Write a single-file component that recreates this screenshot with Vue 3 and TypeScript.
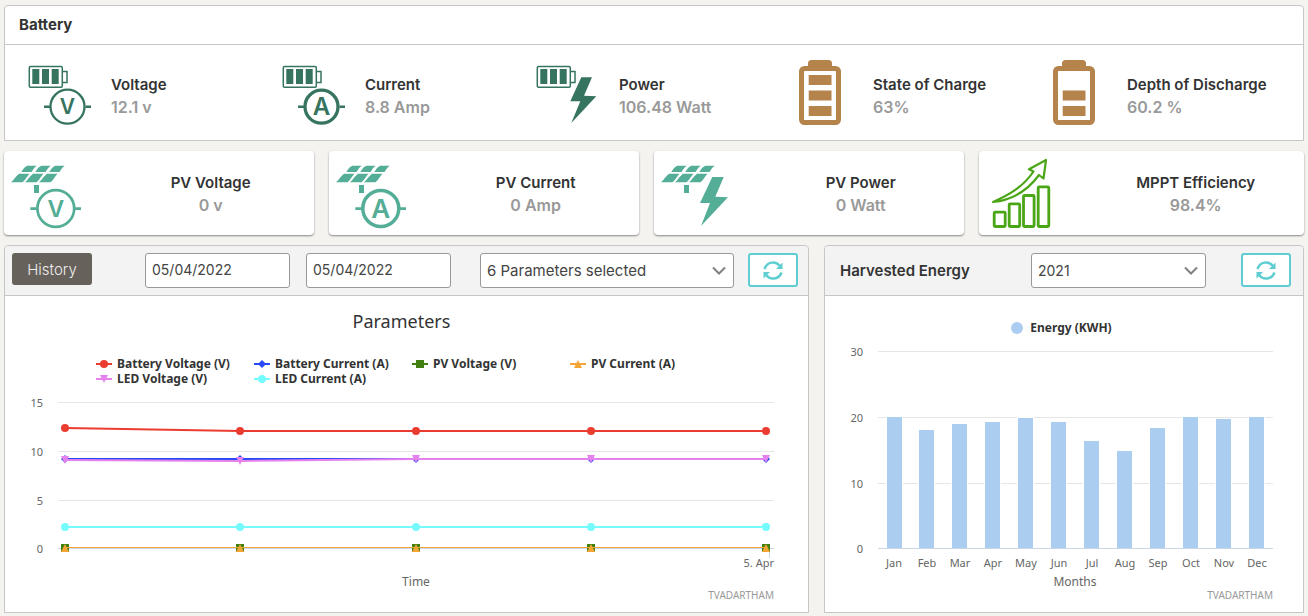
<script setup lang="ts">
import { ref } from 'vue'

type Kind = 'volt' | 'amp' | 'bolt' | 'full' | 'low' | 'growth'
type Shape = 'circle' | 'diamond' | 'square' | 'up' | 'down'

interface Metric {
  label: string
  value: string
  kind: Kind
}

interface Series {
  name: string
  color: string
  shape: Shape
  width: number
  ys: number[]
}

const battery: Metric[] = [
  { label: 'Voltage', value: '12.1 v', kind: 'volt' },
  { label: 'Current', value: '8.8 Amp', kind: 'amp' },
  { label: 'Power', value: '106.48 Watt', kind: 'bolt' },
  { label: 'State of Charge', value: '63%', kind: 'full' },
  { label: 'Depth of Discharge', value: '60.2 %', kind: 'low' },
]

const solar: Metric[] = [
  { label: 'PV Voltage', value: '0 v', kind: 'volt' },
  { label: 'PV Current', value: '0 Amp', kind: 'amp' },
  { label: 'PV Power', value: '0 Watt', kind: 'bolt' },
  { label: 'MPPT Efficiency', value: '98.4%', kind: 'growth' },
]

const startDate = ref('05/04/2022')
const endDate = ref('05/04/2022')
const selection = ref('6 Parameters selected')
const year = ref('2021')

const pointX = [60, 235, 411, 586, 761]
const series: Series[] = [
  { name: 'Battery Voltage (V)', color: '#ea3c30', shape: 'circle', width: 2, ys: [38, 41, 41, 41, 41] },
  { name: 'Battery Current (A)', color: '#2748f5', shape: 'diamond', width: 2, ys: [69, 69, 69, 69, 69] },
  { name: 'PV Voltage (V)', color: '#3f8010', shape: 'square', width: 1, ys: [158, 158, 158, 158, 158] },
  { name: 'PV Current (A)', color: '#f3a536', shape: 'up', width: 1, ys: [158, 158, 158, 158, 158] },
  { name: 'LED Voltage (V)', color: '#e582ee', shape: 'down', width: 2, ys: [70, 71, 69, 69, 69] },
  { name: 'LED Current (A)', color: '#75fbfd', shape: 'circle', width: 2, ys: [137, 137, 137, 137, 137] },
]

const lineTicks = [
  { label: '15', y: 12 },
  { label: '10', y: 61 },
  { label: '5', y: 110 },
  { label: '0', y: 158 },
]

const barTicks = [
  { label: '30', y: 11 },
  { label: '20', y: 77 },
  { label: '10', y: 143 },
  { label: '0', y: 208 },
]

const months = [
  { name: 'Jan', height: 131 },
  { name: 'Feb', height: 118 },
  { name: 'Mar', height: 124 },
  { name: 'Apr', height: 126 },
  { name: 'May', height: 130 },
  { name: 'Jun', height: 126 },
  { name: 'Jul', height: 107 },
  { name: 'Aug', height: 97 },
  { name: 'Sep', height: 120 },
  { name: 'Oct', height: 131 },
  { name: 'Nov', height: 129 },
  { name: 'Dec', height: 131 },
]

function barX(index: number): number {
  return index === 0 ? 62 : 61 + index * 33
}

function markerPath(shape: Shape, x: number, y: number): string {
  if (shape === 'circle') return `M${x - 4} ${y}a4 4 0 1 0 8 0a4 4 0 1 0 -8 0z`
  if (shape === 'diamond') return `M${x} ${y - 4}L${x + 4} ${y}L${x} ${y + 4}L${x - 4} ${y}z`
  if (shape === 'square') return `M${x - 4} ${y - 4}h8v8h-8z`
  if (shape === 'up') return `M${x} ${y - 4}L${x + 4} ${y + 4}H${x - 4}z`
  return `M${x - 4} ${y - 4}h8L${x} ${y + 4}z`
}

function linePath(s: Series): string {
  const shift = s.width === 1 ? -0.5 : 0
  return pointX.map((x, i) => `${i ? 'L' : 'M'}${x} ${s.ys[i] + shift}`).join('')
}
</script>

<template>
  <main class="page">
    <section class="panel battery">
      <h2 class="battery-head">Battery</h2>
      <div class="battery-body">
        <div v-for="m in battery" :key="m.label" class="metric">
          <svg class="metric-icon" viewBox="0 0 64 66" aria-hidden="true">
            <g v-if="m.kind === 'full' || m.kind === 'low'" fill="#b5844d">
              <path d="M18 7V3.500a3.500 3.500 0 0 1 3.500-3.500h17a3.500 3.500 0 0 1 3.500 3.500V7z" />
              <rect x="11.500" y="8.500" width="37" height="54" rx="3" fill="none" stroke="#b5844d" stroke-width="5" />
              <rect v-if="m.kind === 'full'" x="18.700" y="15" width="22.800" height="10" />
              <rect x="18.700" y="30.500" width="22.800" height="10" />
              <rect x="18.700" y="46" width="22.800" height="10" />
            </g>
            <g v-else fill="#36745f">
              <rect x="1.300" y="6.500" width="33" height="20.800" rx="1.200" fill="none" stroke="#36745f" stroke-width="1.500" />
              <path d="M34.500 11.500h4.500v11h-4.500" fill="none" stroke="#36745f" stroke-width="1.500" />
              <path d="M4.300 9h7v15h-7zM14 9h7v15h-7zM23.700 9h7v15h-7z" />
              <path v-if="m.kind === 'bolt'" d="M45.300 17.300H56L48 35.700L60.300 36.300L35.300 63L44.300 41.300H34.300z" />
              <g v-else>
                <circle
                  cx="39.500" cy="46.700" :r="m.kind === 'volt' ? 17 : 16.500" fill="none" stroke="#36745f"
                  :stroke-width="m.kind === 'volt' ? 2.300 : 3.300"
                />
                <path d="M16 46.700h6M57.500 46.700H63" stroke="#36745f" stroke-width="2.500" />
                <text
                  class="letter" x="39.500" :y="m.kind === 'volt' ? 54 : 55"
                  :font-size="m.kind === 'volt' ? 21 : 24" text-anchor="middle"
                >{{ m.kind === 'volt' ? 'V' : 'A' }}</text>
              </g>
            </g>
          </svg>
          <div class="metric-text">
            <div class="label">{{ m.label }}</div>
            <div class="value">{{ m.value }}</div>
          </div>
        </div>
      </div>
    </section>

    <section class="solar">
      <article v-for="m in solar" :key="m.label" class="card">
        <div class="card-icon">
          <svg viewBox="0 0 72 72" aria-hidden="true">
            <g v-if="m.kind === 'growth'" fill="none" stroke="#4aa616" stroke-width="2.800" stroke-linejoin="round">
              <rect x="8.200" y="54.200" width="11" height="14.300" rx="1" />
              <rect x="23.200" y="45.800" width="10.500" height="22.700" rx="1" />
              <rect x="37.500" y="37.500" width="10.600" height="31" rx="1" />
              <rect x="52.200" y="28.900" width="10.600" height="39.600" rx="1" />
              <path
                d="M7 44C23 37 37 29 47.500 13.500L43 11.300L60 2L57.500 20.500L53 17C42 32 26 42 7 44z"
                stroke-width="2.200"
              />
            </g>
            <g v-else fill="#54ad96">
              <path
                v-for="n in 3" :key="n" :transform="`translate(${(n - 1) * 14} 0)`"
                d="M16.300 7.700H25.700C23.500 9 22 11.500 20.500 14H10.300C12 11 14 8.500 16.300 7.700zM8 15.700H18.500C16.500 17.500 14.500 22 11.500 24.300H0C3 21.500 5 18 8 15.700z"
              />
              <path d="M23 27h5v8h-5z" />
              <path v-if="m.kind === 'bolt'" d="M51.300 19H62.700L54.300 38.700L67 39.300L40 68L49 45H39z" />
              <g v-else>
                <circle
                  cx="44.800" cy="50.500" :r="m.kind === 'volt' ? 18.400 : 18" fill="none" stroke="#54ad96"
                  :stroke-width="m.kind === 'volt' ? 2.700 : 3.500"
                />
                <path d="M19.300 50.700h7M63.500 50.700H70" stroke="#54ad96" stroke-width="2.700" />
                <text
                  class="letter" x="44.800" :y="m.kind === 'volt' ? 59 : 60"
                  :font-size="m.kind === 'volt' ? 23 : 26" text-anchor="middle"
                >{{ m.kind === 'volt' ? 'V' : 'A' }}</text>
              </g>
            </g>
          </svg>
        </div>
        <div class="card-text">
          <div class="label">{{ m.label }}</div>
          <div class="value">{{ m.value }}</div>
        </div>
      </article>
    </section>

    <div class="charts">
      <section class="panel">
        <header class="toolbar">
          <button type="button" class="history">History</button>
          <input v-model="startDate" class="field date first" type="text" aria-label="Start date">
          <input v-model="endDate" class="field date" type="text" aria-label="End date">
          <div class="drop params">
            <select v-model="selection" class="field" aria-label="Parameters">
              <option>6 Parameters selected</option>
            </select>
            <svg class="chevron" viewBox="0 0 14 10" aria-hidden="true"><path d="M1 1.500L7 7.500L13 1.500" /></svg>
          </div>
          <button type="button" class="refresh" aria-label="Refresh history">
            <svg viewBox="0 0 20 19" aria-hidden="true">
              <path class="arc" d="M1.500 8C4 .5 12.500 -.500 17 5M18.500 11.500C16 18.500 7.500 19.500 3 14" />
              <path d="M19.500 1.500V8H13zM.5 17.500V11H7z" />
            </svg>
          </button>
        </header>
        <h3 class="chart-title">Parameters</h3>
        <ul class="legend">
          <li v-for="s in series" :key="s.name">
            <svg viewBox="0 0 16 10" aria-hidden="true">
              <path d="M0 5H16" :stroke="s.color" stroke-width="2" />
              <path :d="markerPath(s.shape, 8, 5)" :fill="s.color" />
            </svg>
            {{ s.name }}
          </li>
        </ul>
        <svg class="plot" viewBox="0 0 803 222" role="img" aria-label="Parameters over time">
          <g v-for="t in lineTicks" :key="t.label">
            <path :d="`M53 ${t.y + 0.5}H769`" :stroke="t.label === '0' ? '#ccd6eb' : '#e6e6e6'" />
            <text class="tick" x="38" :y="t.y + 5" text-anchor="end">{{ t.label }}</text>
          </g>
          <path d="M764.500 158V168" stroke="#ccd6eb" />
          <g v-for="s in series" :key="s.name">
            <path :d="linePath(s)" fill="none" :stroke="s.color" :stroke-width="s.width" />
            <path v-for="(x, i) in pointX" :key="x" :d="markerPath(s.shape, x, s.ys[i])" :fill="s.color" />
          </g>
          <text class="tick" x="769" y="177" text-anchor="end">5. Apr</text>
          <text class="axis" x="411" y="196" text-anchor="middle">Time</text>
          <text class="credit" x="769" y="209" text-anchor="end">TVADARTHAM</text>
        </svg>
      </section>

      <section class="panel">
        <header class="toolbar energy">
          <h2>Harvested Energy</h2>
          <div class="drop year">
            <select v-model="year" class="field" aria-label="Year">
              <option>2021</option>
            </select>
            <svg class="chevron" viewBox="0 0 14 10" aria-hidden="true"><path d="M1 1.500L7 7.500L13 1.500" /></svg>
          </div>
          <button type="button" class="refresh" aria-label="Refresh energy">
            <svg viewBox="0 0 20 19" aria-hidden="true">
              <path class="arc" d="M1.500 8C4 .5 12.500 -.500 17 5M18.500 11.500C16 18.500 7.500 19.500 3 14" />
              <path d="M19.500 1.500V8H13zM.5 17.500V11H7z" />
            </svg>
          </button>
        </header>
        <div class="energy-legend"><span class="dot"></span>Energy (KWH)</div>
        <svg class="plot" viewBox="0 0 478 272" role="img" aria-label="Energy by month">
          <g v-for="t in barTicks" :key="t.label">
            <path :d="`M53 ${t.y + 0.5}H448`" :stroke="t.label === '0' ? '#ccd6eb' : '#e6e6e6'" />
            <text class="tick" x="38" :y="t.y + 5" text-anchor="end">{{ t.label }}</text>
          </g>
          <g v-for="(m, i) in months" :key="m.name">
            <rect :x="barX(i) - 1" :y="207 - m.height" width="17" :height="m.height + 1" fill="#fff" />
            <rect :x="barX(i)" :y="208 - m.height" width="15" :height="m.height" fill="#abcdf0" />
            <text class="tick" :x="69 + i * 33" y="227" text-anchor="middle">{{ m.name }}</text>
          </g>
          <text class="axis" x="250" y="246" text-anchor="middle">Months</text>
          <text class="credit" x="448" y="259" text-anchor="end">TVADARTHAM</text>
        </svg>
      </section>
    </div>
  </main>
</template>

<style>
body {
  margin: 0;
  background: #f4f3ef;
}
</style>

<style scoped>
* {
  box-sizing: border-box;
}
.page {
  padding: 5px 4px 3px;
  font-family: Inter, "Liberation Sans", sans-serif;
  font-size: 15px;
  color: #333;
}
h2,
h3 {
  margin: 0;
}
.panel {
  background: #fff;
  border: 1px solid #c6c6c6;
  border-radius: 4px 4px 0 0;
}
.battery-head {
  padding: 8px 14px;
  border-bottom: 1px solid #c6c6c6;
  font-size: 15px;
  line-height: 22px;
  font-weight: 700;
}
.battery-body {
  display: grid;
  grid-template-columns: repeat(5, 1fr);
  padding: 15px 14px 14px;
}
.metric {
  display: flex;
  gap: 19px;
  padding-left: 9px;
}
.metric-icon {
  flex: none;
  width: 64px;
  height: 66px;
}
.metric-text {
  padding-top: 14px;
  white-space: nowrap;
}
.letter {
  font-family: Inter, "Liberation Sans", sans-serif;
  font-weight: 600;
}
.label,
.value {
  line-height: 22px;
  font-weight: 600;
}
.value {
  font-size: 16px;
  color: #999;
}
.solar {
  display: grid;
  grid-template-columns: repeat(4, 1fr);
  margin: 10px 0;
}
.card {
  display: grid;
  grid-template-columns: 1fr 2fr;
  align-items: center;
  margin-right: 15px;
  padding: 7px 0 5px;
  background: #fff;
  border-radius: 4px;
  box-shadow: 0 1px 2px rgba(0, 0, 0, 0.45);
}
.card:last-child {
  margin-right: 0;
}
.card-icon {
  padding-left: 7px;
}
.card-icon svg {
  display: block;
  width: 72px;
  height: 72px;
}
.card-text {
  text-align: center;
}
.charts {
  display: grid;
  grid-template-columns: 805fr 480fr;
  gap: 15px;
}
.toolbar {
  display: flex;
  align-items: flex-start;
  padding: 7px 10px 7px 7px;
  background: #f3f3f3;
  border-bottom: 1px solid #c6c6c6;
  border-radius: 4px 4px 0 0;
}
.toolbar h2 {
  flex: 1;
  font-size: 15px;
  line-height: 35px;
  font-weight: 600;
}
.toolbar.energy {
  padding: 7px 12px 7px 15px;
}
button {
  cursor: pointer;
}
.history {
  flex: none;
  width: 80px;
  height: 32px;
  padding: 0;
  border: 0;
  border-radius: 3px;
  background: #66615b;
  color: #eee;
  font: 300 15px Inter, "Liberation Sans", sans-serif;
}
.field {
  width: 100%;
  height: 35px;
  padding: 0 6px;
  border: 1px solid #999;
  border-radius: 3px;
  background: #fff;
  color: #444;
  font: 400 14px Inter, "Liberation Sans", sans-serif;
  appearance: none;
}
.date {
  flex: 1 1 145px;
  min-width: 0;
  padding-bottom: 3px;
}
.date.first {
  margin: 0 16px 0 53px;
}
.drop {
  position: relative;
}
.params {
  flex: 1 1 254px;
  margin: 0 14px 0 29px;
}
.params .field {
  font-size: 15px;
}
.year {
  width: 175px;
  margin-right: 35px;
}
.chevron {
  position: absolute;
  right: 8px;
  top: 13px;
  width: 14px;
  height: 10px;
  fill: none;
  stroke: #808080;
  stroke-width: 2;
  pointer-events: none;
}
.refresh {
  display: flex;
  flex: none;
  justify-content: center;
  align-items: center;
  width: 50px;
  height: 34px;
  padding: 0;
  border: 2px solid #5fcdd1;
  border-radius: 3px;
  background: #fff;
}
.refresh svg {
  width: 20px;
  height: 19px;
  fill: #5fcdd1;
}
.refresh .arc {
  fill: none;
  stroke: #5fcdd1;
  stroke-width: 2.5;
}
.chart-title,
.legend,
.energy-legend,
.plot {
  font-family: "Noto Sans", "Open Sans", sans-serif;
}
.chart-title {
  padding: 12px 10px 22px 0;
  text-align: center;
  font-size: 18px;
  line-height: 26px;
  font-weight: 400;
}
.legend {
  display: grid;
  grid-template-columns: repeat(4, 158px);
  margin: 0;
  padding: 0 0 4px 91px;
  list-style: none;
  font-size: 12px;
  line-height: 15px;
  font-weight: 700;
}
.legend li {
  display: flex;
  align-items: center;
  gap: 5px;
}
.legend svg {
  width: 16px;
  height: 10px;
}
.energy-legend {
  display: flex;
  justify-content: center;
  align-items: center;
  gap: 7px;
  padding: 22px 5px 3px 0;
  font-size: 12px;
  line-height: 19px;
  font-weight: 700;
}
.dot {
  width: 12px;
  height: 12px;
  border-radius: 50%;
  background: #abcdf0;
}
.plot {
  display: block;
  width: 100%;
  height: auto;
}
.tick {
  font-size: 11px;
  fill: #666;
}
.axis {
  font-size: 12px;
  fill: #666;
}
.credit {
  font-size: 10px;
  fill: #999;
}
</style>
